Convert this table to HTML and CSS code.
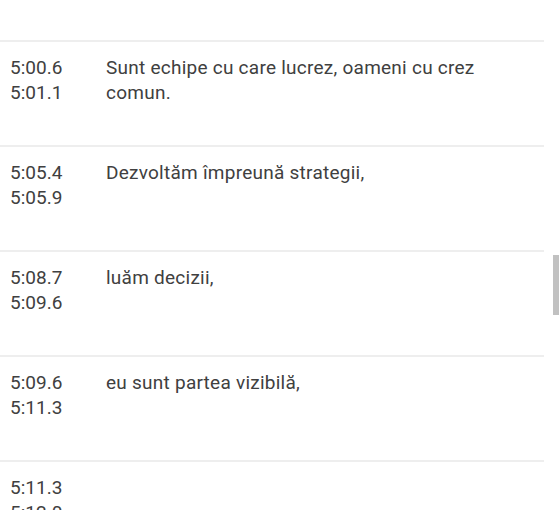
FILE: index.html
```html
<!DOCTYPE html>
<html>
<head>
    <title>Transcript</title>
    <link rel="stylesheet" href="styles.css">
</head>
<body>
    <div class="transcript">
        <!-- Cues -->
        <div class="cue-list">
            <div class="cue-spacer"></div>
            <div class="cue">
                <div class="cue-time">
                    <span>5:00.6</span>
                    <span>5:01.1</span>
                </div>
                <div class="cue-text">Sunt echipe cu care lucrez, oameni cu crez comun.</div>
            </div>
            <div class="cue">
                <div class="cue-time">
                    <span>5:05.4</span>
                    <span>5:05.9</span>
                </div>
                <div class="cue-text">Dezvoltăm împreună strategii,</div>
            </div>
            <div class="cue">
                <div class="cue-time">
                    <span>5:08.7</span>
                    <span>5:09.6</span>
                </div>
                <div class="cue-text">luăm decizii,</div>
            </div>
            <div class="cue">
                <div class="cue-time">
                    <span>5:09.6</span>
                    <span>5:11.3</span>
                </div>
                <div class="cue-text">eu sunt partea vizibilă,</div>
            </div>
            <div class="cue">
                <div class="cue-time">
                    <span>5:11.3</span>
                    <span>5:12.0</span>
                </div>
                <div class="cue-text"></div>
            </div>
        </div>

        <!-- Scrollbar -->
        <div class="scroll-thumb"></div>
    </div>
</body>
</html>
```

FILE: styles.css
```css
body {
    margin: 0;
    background: #fff;
    font-family: Roboto, "Liberation Sans", sans-serif;
    color: #404040;
}

.transcript {
    position: relative;
    height: 510px;
    overflow: hidden;
}

.cue-list {
    width: 544px;
}

.cue-spacer {
    height: 40px;
}

.cue {
    display: flex;
    height: 90px;
    padding-top: 13px;
    border-top: 2px solid #eeeeee;
    font-size: 19px;
    line-height: 25px;
}

.cue-time {
    display: flex;
    flex-direction: column;
    width: 96px;
    padding-left: 10px;
    flex-shrink: 0;
}

.cue-text {
    flex: 1;
    padding-right: 20px;
    letter-spacing: 0.25px;
}

.scroll-thumb {
    position: absolute;
    top: 255px;
    right: 0;
    width: 6px;
    height: 60px;
    background: #c1c1c1;
}
```
